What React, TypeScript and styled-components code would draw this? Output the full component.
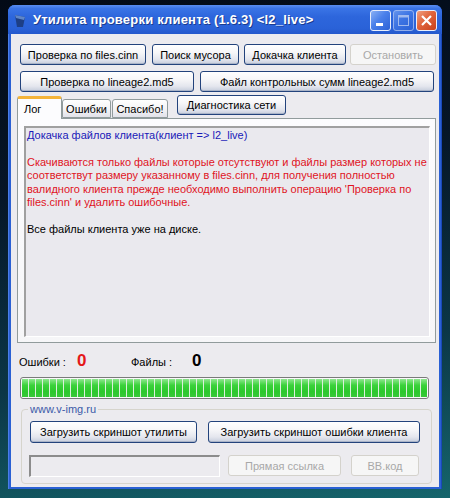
import styled, { createGlobalStyle } from "styled-components";

const GlobalStyles = createGlobalStyle`
  * {
    margin: 0;
    padding: 0;
    box-sizing: border-box;
  }
  html, body {
    width: 450px;
    height: 498px;
    overflow: hidden;
  }
  body {
    font-family: "Liberation Sans", Arial, sans-serif;
    font-size: 11px;
    color: #000;
  }
`;

const redLines = [
  "Скачиваются только файлы которые отсутствуют и файлы размер которых не",
  "соответствут размеру указанному в files.cinn, для получения полностью",
  "валидного клиента прежде необходимо выполнить операцию 'Проверка по",
  "files.cinn' и удалить ошибочные.",
];

function App() {
  return (
    <Desktop>
      <GlobalStyles />
      <Window>
        <TitleBar>
          <AppIcon viewBox="0 0 12 14">
            <path d="M1 1 L11 3 L9 13 L3 13 Z" fill="#1d3f86" />
            <path d="M1 1 L11 3 L10 6 L2 4 Z" fill="#5f86c8" />
          </AppIcon>
          <Title>Утилита проверки клиента (1.6.3) &lt;l2_live&gt;</Title>
          <CaptionButtons>
            <CaptionButton>
              <svg width="19" height="19" viewBox="0 0 19 19">
                <rect x="5" y="12" width="7" height="3" fill="#fff" />
              </svg>
            </CaptionButton>
            <CaptionButton $faded>
              <svg width="19" height="19" viewBox="0 0 19 19">
                <rect x="4.5" y="4.5" width="10" height="10" fill="none" stroke="#fff" strokeWidth="1" />
                <rect x="4.5" y="4.5" width="10" height="2" fill="#fff" />
              </svg>
            </CaptionButton>
            <CaptionButton $close>
              <svg width="19" height="19" viewBox="0 0 19 19">
                <path d="M5 5 L14 14 M14 5 L5 14" stroke="#fff" strokeWidth="2.2" />
              </svg>
            </CaptionButton>
          </CaptionButtons>
        </TitleBar>
        <Client>
          <ButtonRow>
            <Button $w={126}>Проверка по files.cinn</Button>
            <Button $w={87} $gap={6}>Поиск мусора</Button>
            <Button $w={102} $gap={5}>Докачка клиента</Button>
            <Button $w={86} $gap={4} disabled>Остановить</Button>
          </ButtonRow>
          <ButtonRow $top={6}>
            <Button $w={174}>Проверка по lineage2.md5</Button>
            <Button $w={234} $gap={6}>Файл контрольных сумм lineage2.md5</Button>
          </ButtonRow>
          <TabStrip>
            <Tab $w={45} $active>Лог</Tab>
            <Tab $w={49}>Ошибки</Tab>
            <Tab $w={56} $gap={1}>Спасибо!</Tab>
            <DiagButton $w={109}>Диагностика сети</DiagButton>
          </TabStrip>
          <TabPanel>
            <LogBox>
              <LogLine $color="#1a1ab8">Докачка файлов клиента(клиент =&gt; l2_live)</LogLine>
              <LogLine>&nbsp;</LogLine>
              {redLines.map((line) => (
                <LogLine key={line} $color="#e0141e">
                  {line}
                </LogLine>
              ))}
              <LogLine>&nbsp;</LogLine>
              <LogLine>Все файлы клиента уже на диске.</LogLine>
            </LogBox>
          </TabPanel>
          <StatsRow>
            <StatLabel $w={58}>Ошибки :</StatLabel>
            <StatValue $w={54} $color="#e41818">0</StatValue>
            <StatLabel $w={61}>Файлы :</StatLabel>
            <StatValue $color="#000">0</StatValue>
          </StatsRow>
          <Progress>
            <ProgressFill />
          </Progress>
          <Group>
            <Legend>www.v-img.ru</Legend>
            <ButtonRow>
              <Button $w={167} $h={22}>Загрузить скриншот утилиты</Button>
              <Button $w={212} $h={22} $gap={11}>Загрузить скриншот ошибки клиента</Button>
            </ButtonRow>
            <ButtonRow $top={12}>
              <LinkInput readOnly value="" />
              <Button $w={113} $gap={8} disabled>Прямая ссылка</Button>
              <Button $w={68} $gap={10} disabled>BB.код</Button>
            </ButtonRow>
          </Group>
        </Client>
      </Window>
    </Desktop>
  );
}

export default App;

const Desktop = styled.div`
  width: 450px;
  height: 498px;
  padding: 5px 0 0 8px;
  background: linear-gradient(172deg, #030a16 0%, #061628 35%, #0b3646 70%, #15656c 100%);
`;

const Window = styled.div`
  width: 434px;
  height: 484px;
  display: flex;
  flex-direction: column;
  background: #2a60d4;
  border-radius: 7px 7px 0 0;
  padding: 0 3px 2px 3px;
  box-shadow: inset 1px 0 0 #4a7ee8, inset -1px 0 0 #1a48b8;
`;

const TitleBar = styled.div`
  height: 29px;
  margin: 0 -3px;
  padding: 0 5px 0 6px;
  display: flex;
  align-items: center;
  border-radius: 7px 7px 0 0;
  background: linear-gradient(
    #5a8ef0 0%,
    #3a74e6 12%,
    #2d66dc 40%,
    #2a62d8 80%,
    #2458cc 100%
  );
`;

const AppIcon = styled.svg`
  width: 12px;
  height: 14px;
  margin-right: 7px;
  margin-top: 2px;
`;

const Title = styled.div`
  flex: 1;
  color: #fff;
  font-weight: 700;
  font-size: 13px;
  letter-spacing: 0.2px;
  white-space: nowrap;
  text-shadow: 1px 1px 0 #1a3c90;
`;

const CaptionButtons = styled.div`
  display: flex;
  gap: 2px;
  margin-top: 1px;
`;

const CaptionButton = styled.div<{ $close?: boolean; $faded?: boolean }>`
  width: 21px;
  height: 21px;
  border: 1px solid #e8eefc;
  border-radius: 3px;
  display: flex;
  align-items: center;
  justify-content: center;
  opacity: ${(p) => (p.$faded ? 0.55 : 1)};
  background: ${(p) =>
    p.$close
      ? "linear-gradient(135deg, #f0a080 0%, #e0643c 45%, #c8401c 100%)"
      : "linear-gradient(135deg, #8ab0f4 0%, #4a80ea 45%, #2c62d6 100%)"};
`;

const Client = styled.div`
  flex: 1;
  background: #ecebef;
  padding: 10px 2px 0 6px;
  display: flex;
  flex-direction: column;
`;

const ButtonRow = styled.div<{ $top?: number }>`
  display: flex;
  margin-left: 3px;
  margin-top: ${(p) => p.$top ?? 0}px;
`;

const Button = styled.button<{ $w: number; $h?: number; $gap?: number }>`
  width: ${(p) => p.$w}px;
  height: ${(p) => p.$h ?? 21}px;
  margin-left: ${(p) => p.$gap ?? 0}px;
  font-family: "Liberation Sans", Arial, sans-serif;
  font-size: 11px;
  font-weight: 400;
  color: #000;
  white-space: nowrap;
  border: 1px solid #23437c;
  border-radius: 3px;
  background: linear-gradient(#ffffff 0%, #f6f6f8 40%, #e4e6ee 75%, #c6cddc 100%);
  box-shadow: inset 0 -1px 0 #aab4c8;
  &:disabled {
    color: #a8a8a8;
    border-color: #d4d2cc;
    background: #f6f6f6;
    box-shadow: none;
  }
`;

const TabStrip = styled.div`
  display: flex;
  align-items: flex-end;
  margin-top: 4px;
  height: 22px;
  position: relative;
  z-index: 1;
`;

const Tab = styled.div<{ $w: number; $active?: boolean; $gap?: number }>`
  width: ${(p) => p.$w}px;
  height: ${(p) => (p.$active ? 23 : 19)}px;
  margin-left: ${(p) => p.$gap ?? 0}px;
  margin-bottom: ${(p) => (p.$active ? -1 : 0)}px;
  display: flex;
  align-items: center;
  padding-top: ${(p) => (p.$active ? 0 : 1)}px;
  font-size: 11px;
  white-space: nowrap;
  border: 1px solid #919b9c;
  border-bottom: ${(p) => (p.$active ? "none" : "1px solid #919b9c")};
  border-top: ${(p) => (p.$active ? "3px solid #f4b43a" : "1px solid #919b9c")};
  border-radius: 3px 3px 0 0;
  background: ${(p) =>
    p.$active ? "#fcfcfe" : "linear-gradient(#ffffff, #f2f2f4 60%, #e2e2ea)"};
  justify-content: ${(p) => (p.$active ? "flex-start" : "center")};
  padding-left: ${(p) => (p.$active ? 6 : 0)}px;
`;

const DiagButton = styled(Button)`
  height: 20px;
  margin-left: 9px;
  align-self: flex-start;
  margin-top: -1px;
`;

const TabPanel = styled.div`
  width: 419px;
  height: 225px;
  border: 1px solid #919b9c;
  background: linear-gradient(#fcfcfe, #f6f6f8);
  padding: 7px 5px 5px 6px;
`;

const LogBox = styled.div`
  width: 100%;
  height: 100%;
  background: #eae9ee;
  border-top: 2px solid #a0a0a0;
  border-left: 2px solid #a0a0a0;
  border-right: 1px solid #ffffff;
  border-bottom: 1px solid #ffffff;
  padding: 1px 1px;
  overflow: hidden;
`;

const LogLine = styled.div<{ $color?: string }>`
  color: ${(p) => p.$color ?? "#000"};
  font-size: 11px;
  line-height: 13.4px;
  white-space: nowrap;
`;

const StatsRow = styled.div`
  display: flex;
  align-items: baseline;
  height: 22px;
  margin-top: 8px;
  margin-left: 2px;
`;

const StatLabel = styled.span<{ $w: number }>`
  width: ${(p) => p.$w}px;
  font-size: 11px;
`;

const StatValue = styled.span<{ $w?: number; $color: string }>`
  width: ${(p) => (p.$w ? `${p.$w}px` : "auto")};
  color: ${(p) => p.$color};
  font-size: 17px;
  font-weight: 700;
`;

const Progress = styled.div`
  width: 409px;
  height: 22px;
  margin: 4px 0 0 3px;
  border: 1px solid #7a7a7a;
  border-radius: 3px;
  padding: 1px;
  background: #fafafa;
`;

const ProgressFill = styled.div`
  width: 100%;
  height: 100%;
  background: repeating-linear-gradient(
      90deg,
      transparent 0 6px,
      #dcefdc 6px 7px
    ),
    linear-gradient(#8ee88e 0%, #3ad23a 35%, #2cc82c 70%, #38c838 100%);
`;

const Group = styled.fieldset`
  width: 411px;
  margin: 4px 0 0 4px;
  border: 1px solid #d6d4cc;
  border-radius: 4px;
  padding: 6px 0 6px 5px;
`;

const Legend = styled.legend`
  color: #3a5aa8;
  font-size: 11px;
  padding: 0 2px;
  margin-left: 1px;
`;

const LinkInput = styled.input`
  width: 191px;
  height: 22px;
  margin-left: -1px;
  border-top: 2px solid #8c8c8c;
  border-left: 2px solid #8c8c8c;
  border-right: 1px solid #ffffff;
  border-bottom: 1px solid #ffffff;
  background: #ecebef;
  outline: none;
`;
